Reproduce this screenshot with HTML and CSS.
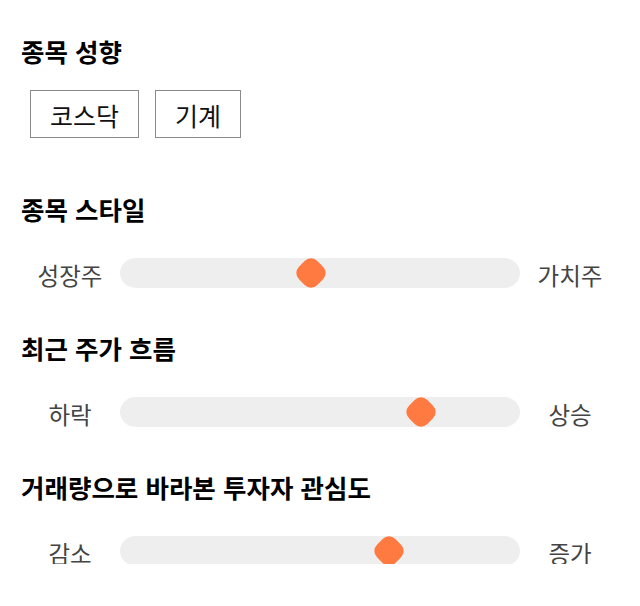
FILE: index.html
```html
<!DOCTYPE html>
<html lang="ko">
<head>
<meta charset="utf-8">
<title>종목 성향</title>
<link rel="stylesheet" href="styles.css">
</head>
<body>
<main class="panel">
  <section class="group group-first">
    <h2 class="title">종목 성향</h2>
    <div class="tags">
      <span class="tag">코스닥</span>
      <span class="tag">기계</span>
    </div>
  </section>

  <section class="group">
    <h2 class="title">종목 스타일</h2>
    <div class="scale">
      <span class="end">성장주</span>
      <div class="track"><span class="thumb" style="left: 47.7%"></span></div>
      <span class="end">가치주</span>
    </div>
  </section>

  <section class="group">
    <h2 class="title">최근 주가 흐름</h2>
    <div class="scale">
      <span class="end">하락</span>
      <div class="track"><span class="thumb" style="left: 75.2%"></span></div>
      <span class="end">상승</span>
    </div>
  </section>

  <section class="group">
    <h2 class="title">거래량으로 바라본 투자자 관심도</h2>
    <div class="scale">
      <span class="end">감소</span>
      <div class="track"><span class="thumb" style="left: 67.2%"></span></div>
      <span class="end">증가</span>
    </div>
  </section>
</main>
</body>
</html>
```

FILE: styles.css
```css
* { box-sizing: border-box; }

html, body {
  margin: 0;
  padding: 0;
  background: #fff;
}

body {
  font-family: "Noto Sans CJK KR", "Noto Sans", sans-serif;
  color: #000;
}

.panel {
  width: 640px;
  padding: 36px 20px 0;
  display: flex;
  flex-direction: column;
}

.group {
  display: flex;
  flex-direction: column;
  padding-top: 47px;
}

.group-first {
  padding-top: 0;
}

.title {
  margin: 0;
  padding-left: 1px;
  font-size: 25.5px;
  line-height: 30px;
  font-weight: 700;
}

.tags {
  display: flex;
  gap: 16px;
  margin-top: 24px;
  padding-left: 10px;
}

.tag {
  height: 48px;
  padding: 0 19px;
  border: 1px solid #8a8a8a;
  font-size: 25px;
  line-height: 48px;
  color: #111;
}

.group-first + .group {
  padding-top: 56px;
}

.scale {
  display: grid;
  grid-template-columns: 100px 1fr 100px;
  align-items: center;
  height: 30px;
  margin-top: 32px;
}

.end {
  text-align: center;
  font-size: 23.5px;
  line-height: 30px;
  color: #444;
  padding-top: 4px;
}

.track {
  position: relative;
  height: 30px;
  background: #eeeeee;
  border-radius: 16px / 15px;
}

.thumb {
  position: absolute;
  top: 50%;
  width: 26px;
  height: 26px;
  background: #ff7a40;
  border-radius: 9px;
  transform: translate(-50%, -50%) rotate(45deg);
}
```
